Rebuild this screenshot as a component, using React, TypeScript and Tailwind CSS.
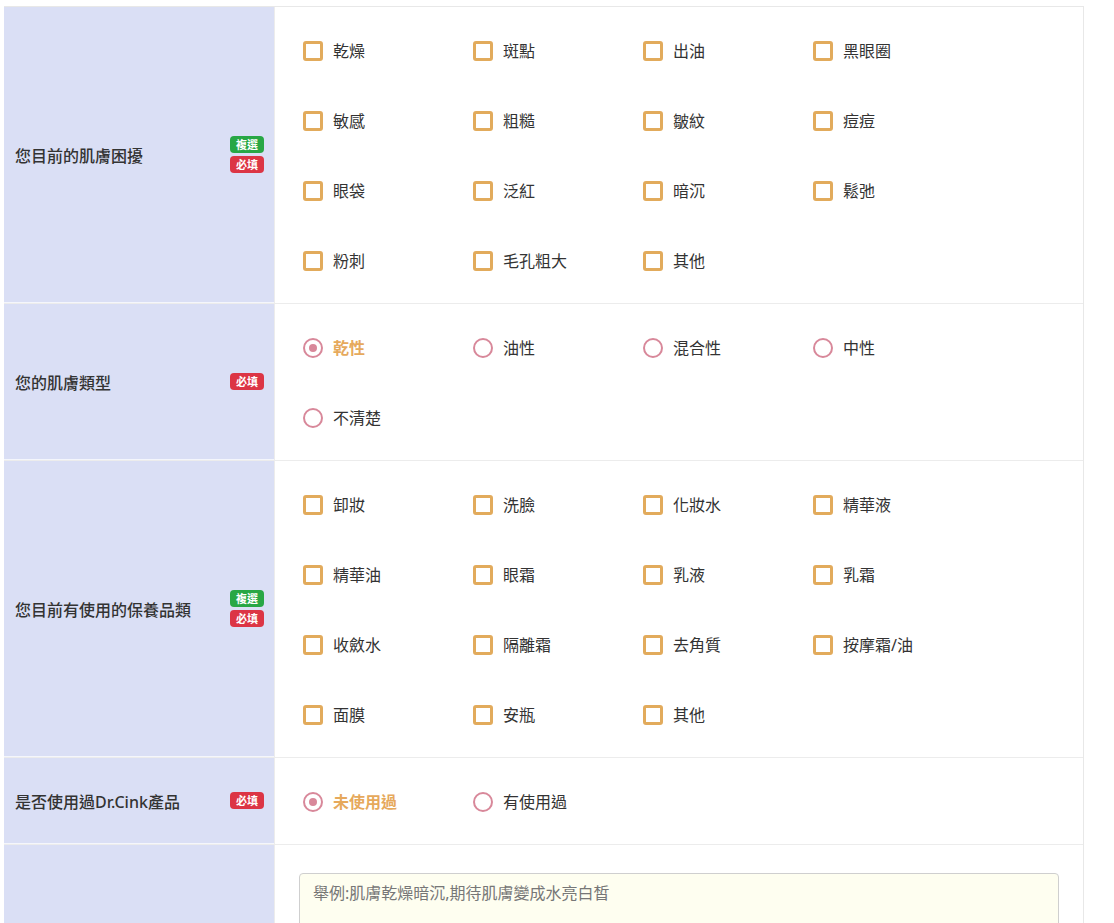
import type { ReactNode } from "react";

const skinIssues = ["乾燥", "斑點", "出油", "黑眼圈", "敏感", "粗糙", "皺紋", "痘痘", "眼袋", "泛紅", "暗沉", "鬆弛", "粉刺", "毛孔粗大", "其他"];
const skinTypes = ["乾性", "油性", "混合性", "中性", "不清楚"];
const products = ["卸妝", "洗臉", "化妝水", "精華液", "精華油", "眼霜", "乳液", "乳霜", "收斂水", "隔離霜", "去角質", "按摩霜/油", "面膜", "安瓶", "其他"];
const usedBefore = ["未使用過", "有使用過"];

function Badge({ color, text }: { color: "green" | "red"; text: string }) {
    return (
        <span
            className={
                "flex h-[17px] w-[34px] items-center justify-center rounded-[4px] text-[11px] font-bold leading-none text-white " +
                (color === "green" ? "bg-[#28a745]" : "bg-[#dc3545]")
            }
        >
            {text}
        </span>
    );
}

function Checkbox({ label }: { label: string }) {
    return (
        <label className="flex h-[70px] items-center gap-[10px] text-[16px] text-[#333]">
            <span className="h-[20px] w-[20px] shrink-0 rounded-[3px] border-[3px] border-[#e2ab5c] bg-white" />
            {label}
        </label>
    );
}

function Radio({ label, checked }: { label: string; checked?: boolean }) {
    return (
        <label className="flex h-[70px] items-center gap-[10px] text-[16px]">
            <span className="flex h-[20px] w-[20px] shrink-0 items-center justify-center rounded-full border-2 border-[#d8889a]">
                {checked && <span className="h-[8px] w-[8px] rounded-full bg-[#d8889a]" />}
            </span>
            <span className={checked ? "font-bold text-[#e6a95c]" : "text-[#333]"}>{label}</span>
        </label>
    );
}

function Row({ label, multi, children }: { label: string; multi?: boolean; children: ReactNode }) {
    return (
        <div className="flex border-b border-[#ececec]">
            <div className="flex w-[270px] shrink-0 items-center justify-between border-b border-white/70 bg-[#dadff5] pl-[11px] pr-[10px]">
                <span className="pt-[2px] text-[16px] font-medium text-[#333]">{label}</span>
                <div className="flex flex-col gap-[3px]">
                    {multi && <Badge color="green" text="複選" />}
                    <Badge color="red" text="必填" />
                </div>
            </div>
            <div className="flex-1 border-l border-[#ececec] pb-[7px] pl-[28px] pt-[9px]">{children}</div>
        </div>
    );
}

export default function App() {
    return (
        <div
            className="min-h-screen bg-white pl-[4px] pt-[6px]"
            style={{ fontFamily: '"Noto Sans", "Noto Sans CJK TC", sans-serif' }}
        >
            <div className="w-[1080px] border-r border-t border-[#e8e8e8]">
                <Row label="您目前的肌膚困擾" multi>
                    <div className="grid grid-cols-[170px_170px_170px_170px]">
                        {skinIssues.map((s, i) => (
                            <Checkbox key={i} label={s} />
                        ))}
                    </div>
                </Row>
                <Row label="您的肌膚類型">
                    <div className="grid grid-cols-[170px_170px_170px_170px]">
                        {skinTypes.map((s, i) => (
                            <Radio key={i} label={s} checked={i === 0} />
                        ))}
                    </div>
                </Row>
                <Row label="您目前有使用的保養品類" multi>
                    <div className="grid grid-cols-[170px_170px_170px_170px]">
                        {products.map((s, i) => (
                            <Checkbox key={i} label={s} />
                        ))}
                    </div>
                </Row>
                <Row label="是否使用過Dr.Cink產品">
                    <div className="grid grid-cols-[170px_170px_170px_170px]">
                        {usedBefore.map((s, i) => (
                            <Radio key={i} label={s} checked={i === 0} />
                        ))}
                    </div>
                </Row>
                <div className="flex h-[100px]">
                    <div className="w-[270px] shrink-0 bg-[#dadff5]" />
                    <div className="flex-1 border-l border-[#ececec] pl-[24px] pr-[24px] pt-[28px]">
                        <textarea
                            className="h-[120px] w-full resize-none rounded-[4px] border border-[#cfcfcf] bg-[#fefef0] px-[13px] py-[7px] text-[16px] text-[#333] placeholder:text-[#777] focus:outline-none"
                            placeholder="舉例:肌膚乾燥暗沉,期待肌膚變成水亮白皙"
                        />
                    </div>
                </div>
            </div>
        </div>
    );
}
